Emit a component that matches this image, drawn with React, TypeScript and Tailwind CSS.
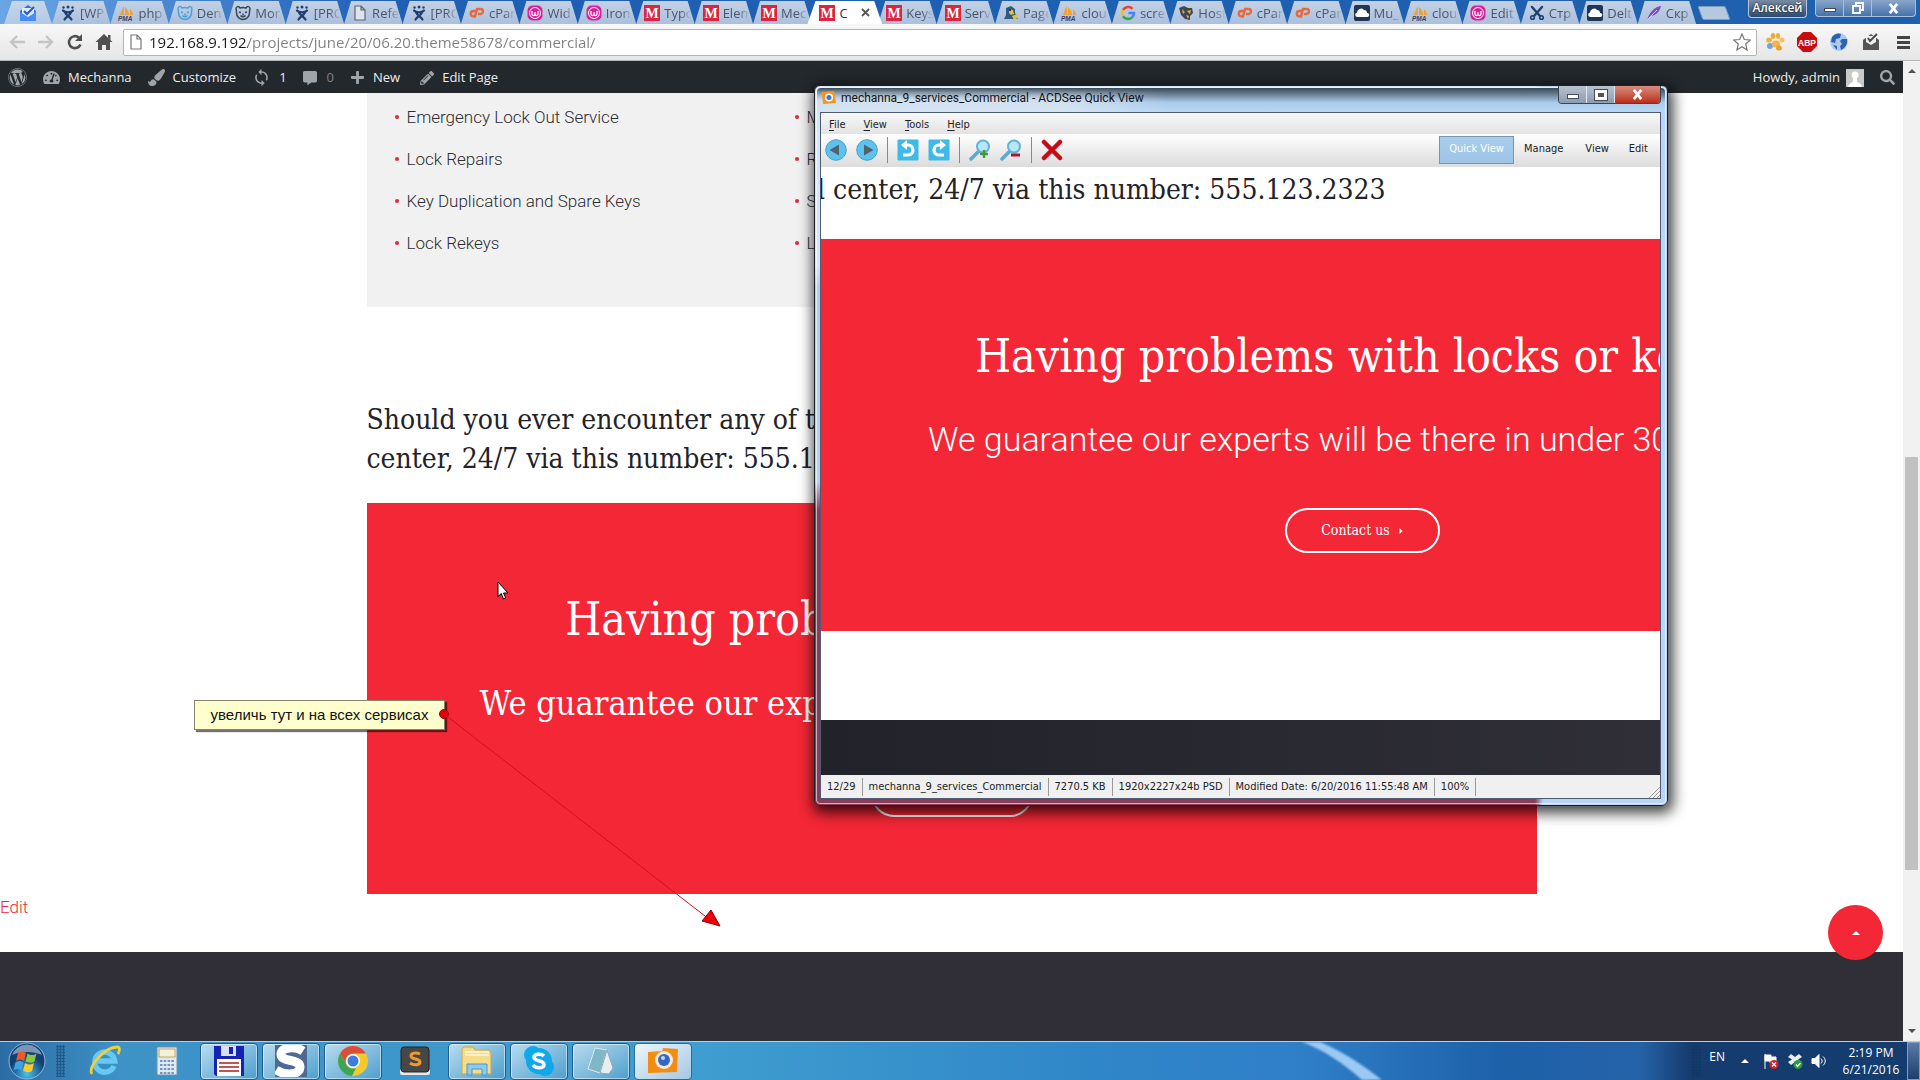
import React from "react";
import { FaWordpress, FaPaintBrush, FaPlus, FaPencilAlt, FaTachometerAlt, FaCommentAlt, FaSearch } from "react-icons/fa";
import { MdSync } from "react-icons/md";

const UI = "font-['Open_Sans',sans-serif]";
const SLAB = "font-['Roboto_Slab','DejaVu_Serif_Condensed','DejaVu_Serif',serif]";

type IconName =
  | "jira" | "pma" | "bear" | "bearDark" | "file" | "cp" | "woo" | "m" | "python" | "google" | "host" | "cloud" | "scissors" | "feather";

function Favicon({ name }: { name: IconName }) {
  const common = { viewBox: "0 0 16 16", className: "size-4 shrink-0", "aria-hidden": true } as const;
  switch (name) {
    case "jira":
      return (
        <svg {...common} fill="none" stroke="#1f3f73" strokeWidth="2.2" strokeLinecap="round">
          <circle cx="3.5" cy="2.5" r="1.2" fill="#1f3f73" strokeWidth="0" />
          <circle cx="8" cy="2" r="1.5" fill="#1f3f73" strokeWidth="0" />
          <circle cx="12.5" cy="2.5" r="1.2" fill="#1f3f73" strokeWidth="0" />
          <path d="M3 5.500c2 2.500 8 2.500 10 0M11 7.500c-1 3-5 4-6.500 7M5 7.500c1 3 5 4 6.500 7" />
        </svg>
      );
    case "pma":
      return (
        <svg {...common}>
          <path d="M6 10V1c-2 3-3 6-4 9zM7 10V2c3 2 4 5 4 8zM12 10V4c2 2 3 4 3 6z" fill="#eda33a" />
          <text x="0" y="16" fontSize="6.500" fontWeight="700" fill="#3d3f66" fontFamily="Liberation Sans" fontStyle="italic">PMA</text>
        </svg>
      );
    case "bear":
    case "bearDark": {
      const c = name === "bear" ? "#4aa0dc" : "#384656";
      return (
        <svg {...common} fill="none" stroke={c} strokeWidth="1.5">
          <path d="M1 4c0-3 3-3 4-1 2-.7 4-.7 6 0 1-2 4-2 4 1-.5 1-.5 2-.5 3.500 0 4-3 7-6.500 7s-6.500-3-6.500-7C1.500 6 1.500 5 1 4z" />
          <path d="M4 7l2 .5M12 7l-2 .5M5.500 10.500c1.500 1.500 3.500 1.500 5 0M8 8.500v2" />
        </svg>
      );
    }
    case "file":
      return (
        <svg {...common} fill="#dbe4ef" stroke="#5b6470" strokeWidth="1.2">
          <path d="M3 1h6l4 4v10H3zM9 1v4h4" />
        </svg>
      );
    case "cp":
      return (
        <svg {...common} fill="none" stroke="#e8683a" strokeWidth="2.4" strokeLinecap="round">
          <path d="M6.500 6H4.500a2.500 2.500 0 000 5.500h1.500L8 4h3.500a2.500 2.500 0 010 5H10" />
        </svg>
      );
    case "woo":
      return (
        <svg {...common}>
          <rect x="0.500" y="0.500" width="15" height="15" rx="5" fill="#d8209a" />
          <circle cx="8" cy="8" r="5.500" fill="none" stroke="#fff" strokeWidth="1" />
          <path d="M5 6v3c0 2 3 2 3 0V7v2c0 2 3 2 3 0V6" fill="none" stroke="#fff" strokeWidth="1.3" />
        </svg>
      );
    case "m":
      return (
        <svg {...common}>
          <rect width="16" height="16" fill="#dc2440" />
          <text x="8" y="13" fontSize="14" textAnchor="middle" fill="#fff" fontFamily="Liberation Serif" fontWeight="700">M</text>
        </svg>
      );
    case "python":
      return (
        <svg {...common}>
          <path d="M3 3l5-2 4 3v4l3 6H1l2-4z" fill="#2c5c86" />
          <path d="M6 4l4 1 1 4-3 1-2-2zM9 11l5-2 1 4-4 2z" fill="#e2c044" />
          <circle cx="7" cy="5" r="1" fill="#111" />
        </svg>
      );
    case "google":
      return (
        <svg {...common} fill="none" strokeWidth="2.6">
          <path d="M12.500 3.800A6 6 0 003 5" stroke="#e94335" />
          <path d="M3 5a6 6 0 000 6.200" stroke="#fbbc05" />
          <path d="M3 11.200a6 6 0 009 1.200" stroke="#34a853" />
          <path d="M12 12.400A6 6 0 0014 8H8.500" stroke="#4285f4" />
        </svg>
      );
    case "host":
      return (
        <svg {...common}>
          <path d="M1 3l5-2 4 2 4 0 1 5-3 3 0 4-5-1-4-4z" fill="#3d4652" />
          <path d="M4 4l3 3-2 2zM9 6l4-1-1 4zM8 10l3 1-1 3z" fill="#e4b23b" />
        </svg>
      );
    case "cloud":
      return (
        <svg {...common}>
          <rect width="16" height="16" rx="2" fill="#1f3553" />
          <path d="M3 12a2.300 2.300 0 010-4.500 4 4 0 017-2.500 3 3 0 013 3 2 2 0 01.500 4z" fill="#fff" />
        </svg>
      );
    case "scissors":
      return (
        <svg {...common} fill="none" stroke="#1c4370" strokeWidth="2.4" strokeLinecap="round">
          <path d="M3 2l8 9M13 2L5 11" />
          <circle cx="3.500" cy="12.500" r="1.800" strokeWidth="1.600" />
          <circle cx="12.500" cy="12.500" r="1.800" strokeWidth="1.600" />
        </svg>
      );
    case "feather":
      return (
        <svg {...common}>
          <path d="M1 15C4 7 8 2 15 1c-1 5-4 9-10 10z" fill="#7b4fc0" />
          <path d="M1 15L11 5" stroke="#d9c6f5" strokeWidth="1" />
        </svg>
      );
  }
}

const tabs: [IconName, string][] = [
  ["jira", "[WP"], ["pma", "php"], ["bear", "Den"], ["bearDark", "Mor"], ["jira", "[PRC"], ["file", "Refe"], ["jira", "[PRC"],
  ["cp", "cPar"], ["woo", "Wid"], ["woo", "Iron"], ["m", "Typo"], ["m", "Elem"], ["m", "Mec"], ["m", "C"], ["m", "Keys"],
  ["m", "Serv"], ["python", "Page"], ["pma", "clou"], ["google", "scre"], ["host", "Host"], ["cp", "cPar"], ["cp", "cPar"],
  ["cloud", "Mu_"], ["pma", "clou"], ["woo", "Edit"], ["scissors", "Стр"], ["cloud", "Delt"], ["feather", "Скр"],
];

function TabStrip() {
  return (
    <div className={`flex h-6 items-end bg-linear-to-r from-[#6aa5e6] via-[#1f5fb4] via-20% to-[#1e61ad] ${UI} text-[13px] leading-5 text-[#4a5668]`}>
      <button aria-label="Inbox" className="ml-1 flex h-[23px] w-12 shrink-0 items-center justify-center bg-linear-to-b from-[#c6d6ea] to-[#b4c9e4] [clip-path:polygon(8px_0,40px_0,48px_100%,0_100%)]">
        <svg viewBox="0 0 18 18" className="size-[18px]">
          <path d="M1 7l8-6 8 6v10H1z" fill="#2f6fe0" />
          <path d="M3 4h12v6l-6 4-6-4z" fill="#dfeaff" />
          <path d="M5 7l3 3 7-7" fill="none" stroke="#2658c4" strokeWidth="2" />
          <path d="M1 8l8 5 8-5v9H1z" fill="#4a8cf5" />
        </svg>
      </button>
      <div className="flex min-w-0 flex-1">
        {tabs.map(([icon, label], i) => {
          const active = i === 13;
          return (
            <button
              key={i}
              className={
                active
                  ? "z-10 -mx-1 flex h-[23px] min-w-0 flex-1 grow-[1.13] items-center gap-1 overflow-hidden bg-white pr-2 pl-3 text-[#333] [clip-path:polygon(8px_0,calc(100%-8px)_0,100%_100%,0_100%)]"
                  : "flex h-[23px] min-w-0 flex-1 items-center gap-1 overflow-hidden bg-linear-to-b from-[#c3d1e4] to-[#aac0de] pr-0.5 pl-2 whitespace-nowrap [clip-path:polygon(7px_0,calc(100%-7px)_0,100%_100%,0_100%)]"
              }
            >
              <Favicon name={icon} />
              <span className={active ? "flex-1 text-left" : "flex-1 overflow-hidden text-left [mask-image:linear-gradient(to_right,#000_55%,transparent_95%)]"}>{label}</span>
              {active && (
                <svg viewBox="0 0 9 9" className="mr-1 size-[9px] shrink-0" stroke="#555" strokeWidth="1.8">
                  <path d="M1 1l7 7M8 1L1 8" />
                </svg>
              )}
            </button>
          );
        })}
      </div>
      <button aria-label="New tab" className="mb-1 ml-1 h-[14px] w-7 skew-x-[20deg] rounded-xs border border-[#7d9cc4] bg-[#b5c8e0]" />
      <div className="ml-5 flex shrink-0 gap-2 self-start text-[12px] text-white">
        <span className="h-[18px] w-[59px] rounded-b-sm border border-t-0 border-[#b7c9de] bg-linear-to-b from-[#7a8ba3] to-[#2f4a70] text-center leading-4 font-semibold [text-shadow:0_0_2px_#000]">Алексей</span>
        <div className="mr-1 flex h-[17px] w-[101px] rounded-b-sm border border-t-0 border-[#a9c0dc] bg-linear-to-b from-[#8ba6c9] to-[#4673ab]">
          <button aria-label="Minimize" className="flex w-7 items-end justify-center border-r border-[#a9c0dc] pb-1"><span className="h-1 w-3 border border-[#444c5c] bg-white" /></button>
          <button aria-label="Restore" className="flex w-7 items-center justify-center border-r border-[#a9c0dc]">
            <svg viewBox="0 0 12 12" className="size-3" fill="none" stroke="#fff" strokeWidth="1.800"><path d="M4 3V1h7v7H9M1 4h7v7H1z" /></svg>
          </button>
          <button aria-label="Close" className="flex flex-1 items-center justify-center">
            <svg viewBox="0 0 12 12" className="size-[11px]" stroke="#fff" strokeWidth="3"><path d="M2 1l8 10M10 1L2 11" /></svg>
          </button>
        </div>
      </div>
    </div>
  );
}

function Toolbar() {
  return (
    <div className="flex h-[37px] items-center border-b border-[#b5b5b5] bg-linear-to-b from-[#f8f8f8] to-[#e6e6e6] pr-2 pl-2">
      <div className="flex w-[115px] shrink-0 items-center gap-[11px]">
        <button aria-label="Back"><svg viewBox="0 0 18 18" className="size-[18px]" fill="none" stroke="#c4c4c4" strokeWidth="2.400"><path d="M17 9H3M9 3L3 9l6 6" /></svg></button>
        <button aria-label="Forward"><svg viewBox="0 0 18 18" className="size-[18px]" fill="none" stroke="#c4c4c4" strokeWidth="2.400"><path d="M1 9h14M9 3l6 6-6 6" /></svg></button>
        <button aria-label="Reload"><svg viewBox="0 0 18 18" className="size-[18px]" fill="none" stroke="#505050" strokeWidth="2.600"><path d="M14.500 11.500A6 6 0 1113 4.700" /><path d="M16 1v7H9z" fill="#505050" stroke="none" /></svg></button>
        <button aria-label="Home"><svg viewBox="0 0 18 18" className="size-[18px]" fill="#505050"><path d="M9 1l8.500 8H15v8h-4v-5H7v5H3V9H.500zM13 2h2.500v5L13 4.500z" /></svg></button>
      </div>
      <div className="flex h-[27px] min-w-0 flex-1 items-center gap-1.5 rounded-xs border border-[#b4b4b0] bg-white px-[5px]">
        <svg viewBox="0 0 14 16" className="h-4 w-[14px] shrink-0" fill="none" stroke="#777" strokeWidth="1.200"><path d="M2 1h6l4 4v10H2zM8 1v4h4" /></svg>
        <input
          aria-label="Address"
          defaultValue="192.168.9.192/projects/june/20/06.20.theme58678/commercial/"
          className={`min-w-0 flex-1 bg-linear-to-r from-[#1b1b1b] from-[98px] to-[#808080] to-[99px] bg-clip-text text-[15px] leading-6 text-transparent outline-none ${UI}`}
        />
        <button aria-label="Bookmark"><svg viewBox="0 0 18 18" className="size-[18px]" fill="#fff" stroke="#777" strokeWidth="1.200"><path d="M9 1l2.300 5.500 6 .5-4.600 4 1.400 6L9 13.800 3.900 17l1.400-6L.700 7l6-.5z" /></svg></button>
      </div>
      <div className="flex shrink-0 items-center gap-3 pl-2">
        <button aria-label="Paw"><svg viewBox="0 0 20 20" className="size-5"><g><ellipse cx="4" cy="8" rx="3" ry="2.500" fill="#e8b63a" /><ellipse cx="8" cy="4" rx="2.200" ry="3" fill="#f0a63a" /><ellipse cx="13" cy="4" rx="2.200" ry="3" fill="#f0b040" /><ellipse cx="17" cy="8" rx="2.500" ry="2.500" fill="#f6c05a" /><ellipse cx="5" cy="14" rx="3" ry="3" fill="#6ea2e6" /><ellipse cx="11" cy="12" rx="4" ry="3.500" fill="#f3b24a" /><ellipse cx="14" cy="16" rx="3" ry="2.500" fill="#f0a030" /></g></svg></button>
        <button aria-label="Adblock"><svg viewBox="0 0 20 20" className="size-5"><path d="M6 0h8l6 6v8l-6 6H6l-6-6V6z" fill="#c70d0d" /><text x="10" y="13.500" textAnchor="middle" fontSize="8.500" fontWeight="700" fill="#fff" fontFamily="Liberation Sans">ABP</text></svg></button>
        <button aria-label="Globe"><svg viewBox="0 0 20 20" className="size-5"><circle cx="10" cy="10" r="9" fill="#a9cdf2" /><path d="M3 5c3-4 7-4 9-3l-1 4-4 1-1 4-4-1zM13 7l5 0c1 5-2 9-6 11l-1-4 2-2-2-3zM4 13l4 1 0 4z" fill="#315fb0" /></svg></button>
        <button aria-label="Inbox extension"><svg viewBox="0 0 20 20" className="size-5"><path d="M2 8l8-6 8 6v10H2z" fill="#555" /><path d="M5 4h10v6l-5 3-5-3z" fill="#eee" /><path d="M7 6l2 3 7-7" fill="none" stroke="#444" strokeWidth="1.800" /><path d="M2 9l8 5 8-5v9H2z" fill="#555" /></svg></button>
        <button aria-label="Menu" className="mr-0.5 ml-1 flex w-[13px] flex-col gap-0.5"><span className="h-[3px] bg-[#444]" /><span className="h-[3px] bg-[#444]" /><span className="h-[3px] bg-[#444]" /></button>
      </div>
    </div>
  );
}

function AdminBar() {
  return (
    <nav className={`flex h-8 shrink-0 items-center bg-[#23282d] px-2 pt-px text-[13px] text-[#eee] ${UI}`}>
      <a href="#wp" aria-label="WordPress"><FaWordpress className="size-[19px] text-[#a0a5aa]" /></a>
      <a href="#site" className="ml-4 flex items-center gap-2"><FaTachometerAlt className="size-[17px] text-[#a0a5aa]" />Mechanna</a>
      <a href="#customize" className="ml-4 flex items-center gap-2"><FaPaintBrush className="size-[17px] text-[#a0a5aa]" />Customize</a>
      <a href="#updates" className="ml-4 flex items-center gap-2"><MdSync className="size-[19px] text-[#a0a5aa]" />1</a>
      <a href="#comments" className="ml-4 flex items-center gap-2.5 text-[#7d8287]"><FaCommentAlt className="size-[14px] text-[#a0a5aa]" />0</a>
      <a href="#new" className="ml-4 flex items-center gap-2"><FaPlus className="size-[15px] text-[#a0a5aa]" />New</a>
      <a href="#edit" className="ml-5 flex items-center gap-2"><FaPencilAlt className="size-[14px] text-[#a0a5aa]" />Edit Page</a>
      <a href="#account" className="ml-auto flex items-center gap-1.5">
        Howdy, admin
        <svg viewBox="0 0 18 18" className="size-[18px]"><rect width="18" height="18" fill="#c9c9c9" /><circle cx="9" cy="6" r="3.500" fill="#fff" /><path d="M2 18c1-4 3-4 5-5V9h4v4c2 1 4 1 5 5z" fill="#fff" /></svg>
      </a>
      <a href="#search" aria-label="Search" className="ml-4"><FaSearch className="size-[15px] text-[#a0a5aa]" /></a>
    </nav>
  );
}

function Caret({ className }: { className: string }) {
  return <svg viewBox="0 0 8 4" className={className} aria-hidden="true"><path d="M0 4l4-4 4 4z" fill="currentColor" /></svg>;
}

const leftServices = ["Emergency Lock Out Service", "Lock Repairs", "Key Duplication and Spare Keys", "Lock Rekeys"];
const rightServices = ["Master Key Systems", "Replacement Locks", "Security Locks", "Lock Installation"];

function ServiceList({ items }: { items: string[] }) {
  return (
    <ul className="flex-1 font-['Roboto',sans-serif] text-[17px] leading-[42px] font-light text-[#2c2c34]">
      {items.map((s) => (
        <li key={s} className="flex items-center gap-2"><span className="size-1 rounded-full bg-[#e0283c]" />{s}</li>
      ))}
    </ul>
  );
}

function Page() {
  return (
    <main className="relative flex min-h-0 flex-1 flex-col overflow-hidden bg-white">
      <div className="mx-auto w-[1170px] shrink-0">
        <section className="flex h-[214px] gap-5 bg-[#f1f1f1] pt-[3px] pl-7">
          <ServiceList items={leftServices} />
          <div className="w-[742px]"><ServiceList items={rightServices} /></div>
        </section>
        <h3 className={`mt-[93px] text-[28px] leading-[39px] text-[#222228] ${SLAB}`}>
          Should you ever encounter any of these issues, call our<br />center, 24/7 via this number: 555.123.2323
        </h3>
        <section className={`mt-[25px] flex h-[391px] flex-col items-center bg-[#f32735] text-white ${SLAB}`}>
          <h2 className="mt-[86px] text-[46px] leading-[60px]">Having problems with locks or keys?</h2>
          <p className="mt-[30px] text-[34px] leading-[48px] font-light">We guarantee our experts will be there in under 30 minutes!</p>
          <button className="mt-11 h-[46px] w-[162px] rounded-full border-2 border-white text-[13px]">Contact us</button>
        </section>
      </div>
      <a href="#edit-entry" className="self-start font-['Roboto',sans-serif] text-[17px] leading-[26px] font-light text-[#e8283c]">Edit</a>
      <footer className="mt-8 flex-1 bg-[#302f38]" />
      <button aria-label="Back to top" className="absolute right-5 bottom-[81px] flex size-[55px] items-center justify-center rounded-full bg-[#f32735] text-white"><Caret className="h-1 w-2" /></button>
    </main>
  );
}

function Scrollbar() {
  return (
    <div className="flex w-[17px] shrink-0 flex-col items-center bg-[#f1f1f1] py-2 text-[#505050]">
      <Caret className="h-1 w-2" />
      <div className="mt-auto mb-[159px] h-[413px] w-[13px] bg-[#c1c1c1]" />
      <Caret className="h-1 w-2 rotate-180" />
    </div>
  );
}

function MenuWord({ word }: { word: string }) {
  return <button><span className="underline underline-offset-2">{word[0]}</span>{word.slice(1)}</button>;
}

function Magnifier({ plus }: { plus?: boolean }) {
  return (
    <svg viewBox="0 0 22 22" className="size-[22px]">
      <path d="M2 20l8-8" stroke="#5fa9cf" strokeWidth="3.500" strokeLinecap="round" />
      <circle cx="14" cy="7.500" r="6" fill="#b8e6f7" stroke="#5fb2da" strokeWidth="2" />
      {plus ? <path d="M15 11v8M11 15h8" stroke="#3f9b35" strokeWidth="2.400" /> : <path d="M11 16h9" stroke="#b80f2e" strokeWidth="3" />}
    </svg>
  );
}

function Rotate({ flip }: { flip?: boolean }) {
  return (
    <svg viewBox="0 0 22 22" className={flip ? "size-[22px] -scale-x-100" : "size-[22px]"}>
      <rect x="0.500" y="0.500" width="21" height="21" rx="1" fill="#3ebae8" />
      <path d="M9 6h2a4.800 4.800 0 110 10H6" fill="none" stroke="#fff" strokeWidth="3.200" />
      <path d="M10 1v10L4 6z" fill="#fff" />
    </svg>
  );
}

function RoundArrow({ flip }: { flip?: boolean }) {
  return (
    <svg viewBox="0 0 22 22" className={flip ? "size-[22px] -scale-x-100" : "size-[22px]"}>
      <circle cx="11" cy="11" r="10.300" fill="#5cc3ee" stroke="#4d9fc6" />
      <path d="M4.500 11L14 5.500v11z" fill="#54616c" />
    </svg>
  );
}

const Sep = () => <span className="h-[26px] w-px bg-[#888]" />;
const status = ["12/29", "mechanna_9_services_Commercial", "7270.5 KB", "1920x2227x24b PSD", "Modified Date: 6/20/2016 11:55:48 AM", "100%"];
const SMALL = "font-['DejaVu_Sans_Condensed','DejaVu_Sans',sans-serif] text-[11px]";

function QuickView() {
  return (
    <section aria-label="ACDSee Quick View" className="absolute top-[85px] left-[814px] flex h-[721px] w-[854px] flex-col rounded-md border border-[#1d2126] bg-[linear-gradient(to_right,transparent_720px,#b9d4f4_728px),linear-gradient(to_bottom,#d5e6f8_25%,#b4cdec_28%,#b9d1ef_55%,#8b3c58_59%)] p-px shadow-[2px_4px_14px_3px_rgba(0,0,0,0.75)]">
      <div className="flex min-h-0 flex-1 flex-col rounded-sm border border-white/60">
        <header className="relative flex h-6 shrink-0 justify-between rounded-t-sm bg-linear-to-b from-[#3a4855] via-[#a9cbea] via-60% to-[#b9d8f5] pl-1">
          <div className="flex items-center gap-1 pr-4 pb-1 font-['Roboto',sans-serif] text-[12px] leading-4 text-[#111]">
            <span className="absolute inset-y-0 left-0 w-[350px] bg-linear-to-r from-[#dde7f2] from-70% to-transparent opacity-80 [mask-image:linear-gradient(to_bottom,transparent,#000_50%)]" />
            <svg viewBox="0 0 16 16" className="relative size-4"><path d="M1 2l12-1 2 12-13 1z" fill="#f2961e" /><circle cx="8" cy="7.500" r="4" fill="#fff" /><circle cx="8" cy="7.500" r="2.500" fill="#3c76d0" /></svg>
            <h1 className="relative">mechanna_9_services_Commercial - ACDSee Quick View</h1>
          </div>
          <div className="-mt-0.5 mr-1 flex h-[18px] w-[103px] overflow-hidden rounded-b-sm border border-t-0 border-[#3b4654]">
            <button aria-label="Minimize" className="flex w-7 items-center justify-center border-r border-[#e0e6ee] bg-linear-to-b from-[#b9c3cf] to-[#8c9bad]"><span className="mt-1 h-[5px] w-3 border border-[#444c5c] bg-white" /></button>
            <button aria-label="Maximize" className="flex w-7 items-center justify-center border-r border-[#e0e6ee] bg-linear-to-b from-[#b9c3cf] to-[#8c9bad]"><span className="h-[10px] w-3 border-3 border-white bg-[#555] outline outline-[#444c5c]" /></button>
            <button aria-label="Close" className="flex flex-1 items-center justify-center bg-linear-to-b from-[#d98a7c] to-[#b92a14]"><svg viewBox="0 0 12 12" className="size-[11px]" stroke="#fff" strokeWidth="3"><path d="M2 1l8 10M10 1L2 11" /></svg></button>
          </div>
        </header>
        <div className="mr-1 mb-1 ml-[3px] flex min-h-0 flex-1 flex-col border border-[#4d5c72] bg-white">
          <nav className={`flex h-[21px] shrink-0 items-center gap-[18px] bg-linear-to-b from-[#f8f8f8] to-[#e3e3e3] px-2 pt-1 text-[#222] ${SMALL}`}>
            {["File", "View", "Tools", "Help"].map((w) => <MenuWord key={w} word={w} />)}
          </nav>
          <div className={`flex h-[33px] shrink-0 items-center gap-[9px] bg-linear-to-b from-white to-[#dcdcdc] px-1 pb-0.5 text-[#222] ${SMALL}`}>
            <button aria-label="Previous"><RoundArrow /></button>
            <button aria-label="Next"><RoundArrow flip /></button>
            <Sep />
            <button aria-label="Rotate left"><Rotate /></button>
            <button aria-label="Rotate right"><Rotate flip /></button>
            <Sep />
            <button aria-label="Zoom in"><Magnifier plus /></button>
            <button aria-label="Zoom out"><Magnifier /></button>
            <Sep />
            <button aria-label="Delete"><svg viewBox="0 0 22 22" className="size-[22px]" stroke="#c70b14" strokeWidth="4.500" strokeLinecap="round"><path d="M3 3l16 16M19 3L3 19" /></svg></button>
            <div className="ml-auto flex items-center">
              <button className="h-7 w-[75px] border border-[#7d92ab] bg-linear-to-b from-[#a9cdec] to-[#9dc4e6] text-white">Quick View</button>
              <button className="px-2.5">Manage</button>
              <button className="px-3">View</button>
              <button className="px-2">Edit</button>
            </div>
          </div>
          <div className={`flex min-h-0 flex-1 flex-col overflow-hidden whitespace-nowrap ${SLAB}`}>
            <p className="-ml-1 h-[72px] shrink-0 pt-[3px] text-[28px] leading-10 text-[#222228]">l center, 24/7 via this number: 555.123.2323</p>
            <div className="flex h-[392px] shrink-0 flex-col items-start bg-[#f32735] text-white">
              <h2 className="mt-[87px] ml-[154px] text-[46px] leading-[60px]">Having problems with locks or keys?</h2>
              <p className="mt-[25px] ml-[107px] font-['Roboto',sans-serif] text-[34px] leading-[56px] font-light">We guarantee our experts will be there in under 30 min</p>
              <button className="mt-[41px] ml-[464px] flex h-[45px] w-[155px] items-center justify-center gap-2 rounded-full border-2 border-white text-[14px]">Contact us <Caret className="h-1 w-1.5 rotate-90" /></button>
            </div>
            <div className="mt-[89px] flex-1 bg-linear-to-r from-[#21222a] to-[#302f38]" />
          </div>
          <footer className={`flex h-[23px] shrink-0 items-center bg-[#f0f0f0] text-[#222] ${SMALL}`}>
            {status.map((s) => <span key={s} className="border-r border-[#999] px-1.5 leading-[18px]">{s}</span>)}
            <svg viewBox="0 0 12 12" className="ml-auto size-3 self-end" stroke="#999"><path d="M1 12L12 1M5 12l7-7M9 12l3-3" /></svg>
          </footer>
        </div>
      </div>
    </section>
  );
}

function Annotation() {
  return (
    <>
      <p className="absolute top-[700px] left-[194px] h-[30px] w-[251px] border border-[#85856a] bg-[#ffffce] text-center font-['Liberation_Sans',sans-serif] text-[15px] leading-7 text-[#111] shadow-[2px_2px_1px_rgba(0,0,0,0.55)]">увеличь тут и на всех сервисах</p>
      <svg viewBox="0 0 284 220" className="absolute top-[710px] left-[440px] h-[220px] w-[284px] overflow-visible" aria-hidden="true">
        <path d="M4 4l270 209" stroke="#d90d18" strokeWidth="1" />
        <circle cx="4" cy="4" r="4.500" fill="#e3000f" stroke="#8f0008" />
        <path d="M280 216l-18-5 9-11z" fill="#f00008" stroke="#8f0008" />
      </svg>
      <svg viewBox="0 0 12 19" className="absolute top-[581px] left-[497px] h-[19px] w-3" aria-hidden="true">
        <path d="M1 1v14.500l3.300-3L6.500 18l2.300-1-2.300-5H11z" fill="#fff" stroke="#000" />
      </svg>
    </>
  );
}

const taskBtn = "flex h-[37px] w-[58px] shrink-0 items-center justify-center";
const framed = "rounded-sm border border-[#1f5c8c] bg-linear-to-br from-[#b8dcf0] to-[#4b9fcc] shadow-[inset_0_0_0_1px_rgba(255,255,255,0.5)]";
const Grip = () => <span className="h-8 w-[9px] bg-[radial-gradient(#0c335c_1px,transparent_1.5px)] bg-size-[3px_3px] opacity-50" />;

function Taskbar() {
  return (
    <div className={`flex h-[39px] shrink-0 items-center border-t border-[#b5cfe4] bg-[linear-gradient(90deg,#2c6ca4_0,#3d92c6_120px,#3f9dcf_700px,#2f86c8_1100px,#2f7fc8_1300px,#1d61aa_1500px,#2562a8_1640px,#163c6e_1690px,#143c70_100%)] text-white ${UI}`}>
      <button aria-label="Start" className="ml-2 shrink-0">
        <svg viewBox="0 0 38 38" className="size-[38px]">
          <defs><radialGradient id="orb" cx="50%" cy="85%"><stop offset="0" stopColor="#49c2ee" /><stop offset="1" stopColor="#123f74" /></radialGradient></defs>
          <circle cx="19" cy="19" r="18" fill="url(#orb)" stroke="#8fb9d8" />
          <path d="M4 13a16 16 0 0130 0c-8-4-22-4-30 0z" fill="#fff" opacity=".45" />
          <path d="M10 11c3-2 5-2 8 0l-2 8c-3-2-5-2-8 0z" fill="#ef5a28" />
          <path d="M19.500 11.500c3 2 6 2 9 0l-2 8c-3 2-6 1-9 0z" fill="#8cc63e" />
          <path d="M7.500 20.500c3-2 5-2 8 0l-2 8c-3-2-5-2-8 0z" fill="#3fa4e6" />
          <path d="M17 21c3 2 6 2 9 0l-2 8c-3 2-6 1-9 0z" fill="#fdc82f" />
        </svg>
      </button>
      <span className="ml-2.5 flex"><Grip /></span>
      <div className="ml-[11px] flex gap-1">
        <button aria-label="Internet Explorer" className={taskBtn}>
          <svg viewBox="0 0 32 32" className="size-8"><path d="M25 21a10 10 0 11.700-5H8" fill="none" stroke="#68c8f4" strokeWidth="5.500" /><path d="M3 29C-2 22 16 2 28 2c4 0 2 5 1 7" fill="none" stroke="#f2cf38" strokeWidth="2.800" /></svg>
        </button>
        <button aria-label="Calculator" className={taskBtn}>
          <svg viewBox="0 0 22 30" className="h-[30px] w-[22px]"><rect x="1" y="1" width="20" height="28" rx="1" fill="#dfe9f2" stroke="#6f93b0" /><rect x="3" y="3" width="16" height="8" fill="#f4f1d8" stroke="#c9a45c" /><path d="M4 15h14M4 19h14M4 23h14M4 27h14" stroke="#7397b8" strokeWidth="2" strokeDasharray="2.500 1.300" /></svg>
        </button>
        <button aria-label="Total Commander" className={`${taskBtn} ${framed}`}>
          <svg viewBox="0 0 32 32" className="size-8"><path d="M1 1h30v30H3l-2-2z" fill="#1524b4" /><rect x="8" y="1" width="15" height="10" fill="#d8dff0" /><rect x="16" y="2" width="4" height="7" fill="#1524b4" /><rect x="4" y="14" width="24" height="17" fill="#fff" /><path d="M6 18h20M6 22h20M6 26h20" stroke="#b01c1c" strokeWidth="1.300" /></svg>
        </button>
        <button aria-label="Stylizer" className={`${taskBtn} ${framed}`}>
          <svg viewBox="0 0 32 32" className="size-8"><rect width="32" height="32" fill="#4c6a94" /><path d="M28 6C20 1 6 2 6 9c0 9 19 4 19 13 0 8-14 9-24 3" fill="none" stroke="#fff" strokeWidth="9" /></svg>
        </button>
        <button aria-label="Chrome" className={`${taskBtn} ${framed}`}>
          <svg viewBox="0 0 32 32" className="size-8"><circle cx="16" cy="16" r="15" fill="#f4c92d" /><path d="M3 8.500A15 15 0 0129 8.500H16a7.500 7.500 0 00-6.500 11.200z" fill="#dd4b3e" /><path d="M3 8.500l6.500 11.200A7.500 7.500 0 0019 23l-4 8A15 15 0 013 8.500z" fill="#3aa757" /><circle cx="16" cy="16" r="7" fill="#fff" /><circle cx="16" cy="16" r="5.500" fill="#3b7de0" /></svg>
        </button>
        <button aria-label="Sublime Text" className={taskBtn}>
          <svg viewBox="0 0 32 32" className="size-8"><rect x="1" y="24" width="30" height="6" rx="2" fill="#e8e8e8" /><rect x="2" y="2" width="28" height="25" rx="3" fill="#474747" stroke="#222" /><path d="M21 9c-4-2-9-1-9 2 0 4 9 2 9 6 0 3-6 4-10 1" fill="none" stroke="#f09a2d" strokeWidth="3" /></svg>
        </button>
        <button aria-label="Explorer" className={`${taskBtn} ${framed}`}>
          <svg viewBox="0 0 32 32" className="size-8"><path d="M1 4l2-2h9l2 3h14l2 3v21H1z" fill="#f3dc8a" stroke="#c9a94c" /><path d="M4 7h24M4 10h24" stroke="#fff8d8" strokeWidth="1.500" /><path d="M6 30V19h20v11h-5v-6H11v6z" fill="#8cc9ea" stroke="#4b97c4" /></svg>
        </button>
        <button aria-label="Skype" className={`${taskBtn} ${framed}`}>
          <svg viewBox="0 0 32 32" className="size-8"><circle cx="10" cy="10" r="9" fill="#0fa9ea" /><circle cx="22" cy="22" r="9" fill="#0fa9ea" /><circle cx="16" cy="16" r="13" fill="#0fa9ea" /><path d="M21 11c-3-3-10-2-10 1.500 0 4 10 2.500 10 7 0 4-8 4.500-11 .5" fill="none" stroke="#fff" strokeWidth="3.500" /></svg>
        </button>
        <button aria-label="Notepad" className={`${taskBtn} ${framed}`}>
          <svg viewBox="0 0 32 32" className="size-8"><path d="M10 3l12 2-7 23L3 24z" fill="#7fb8c4" stroke="#dcebf0" /><path d="M22 5l6 18-4 6-9-1z" fill="#e6eef1" stroke="#8fa8b3" /></svg>
        </button>
        <button aria-label="ACDSee" className={`${taskBtn} rounded-sm border border-[#2d6b98] bg-linear-to-br from-[#eef5fa] to-[#a4c8e2]`}>
          <svg viewBox="0 0 32 32" className="size-8"><path d="M1 7l14-1 1-3 15 1-1 23-29 1z" fill="#f28c12" /><circle cx="17" cy="15" r="9" fill="#f3ead8" /><circle cx="17" cy="15" r="6" fill="#3468c4" /><circle cx="16" cy="13" r="2" fill="#bcd6ff" /></svg>
        </button>
      </div>
      <svg viewBox="0 0 80 38" className="ml-[610px] h-[38px] w-20" preserveAspectRatio="none"><path d="M0 0h18c24 10 44 24 62 38H60C42 22 22 8 0 0z" fill="#a9d3fa" opacity=".9" className="blur-[1px]" /></svg>
      <div className="ml-auto flex h-full shrink-0 items-center">
        <Grip />
        <span className="ml-2 pb-2 text-[12px]">EN</span>
        <Caret className="ml-4 h-1 w-2" />
        <svg viewBox="0 0 16 16" className="ml-3.5 size-4"><path d="M2 1v15M2 2h6v2h5v6H7V8H2z" fill="#fff" stroke="#fff" /><circle cx="11" cy="11.500" r="4.500" fill="#d5202a" /><path d="M9 9.500l4 4M13 9.500l-4 4" stroke="#fff" strokeWidth="1.300" /></svg>
        <svg viewBox="0 0 16 16" className="ml-2 size-4"><path d="M4 1l4 3 4-3 3 3-4 2.500L15 9l-3 3-4-3-4 3-3-3 4-2.500L1 4z" fill="#e9eef3" /><circle cx="11" cy="11.500" r="4.500" fill="#2b9a3c" /><path d="M9 11.500l1.500 2 3-3.500" fill="none" stroke="#fff" strokeWidth="1.300" /></svg>
        <svg viewBox="0 0 16 16" className="ml-2 size-4" fill="none" stroke="#fff"><path d="M1 5.500h3l4-4v13l-4-4H1z" fill="#fff" /><path d="M10 5.500c1.500 1.500 1.500 3.500 0 5M12 3.500c3 3 3 6 0 9" /></svg>
        <div className="ml-3.5 w-[60px] text-center text-[12px] leading-[17px]">2:19 PM<br />6/21/2016</div>
        <button aria-label="Show desktop" className="ml-1.5 h-full w-[13px] border border-[#7f9dc0] bg-linear-to-b from-[#5b7ba5] to-[#1b3f70]" />
      </div>
    </div>
  );
}

export default function App() {
  return (
    <div className="relative flex h-screen flex-col overflow-hidden bg-white">
      <TabStrip />
      <Toolbar />
      <div className="flex min-h-0 flex-1">
        <div className="flex min-w-0 flex-1 flex-col">
          <AdminBar />
          <Page />
        </div>
        <Scrollbar />
      </div>
      <Taskbar />
      <Annotation />
      <QuickView />
    </div>
  );
}
